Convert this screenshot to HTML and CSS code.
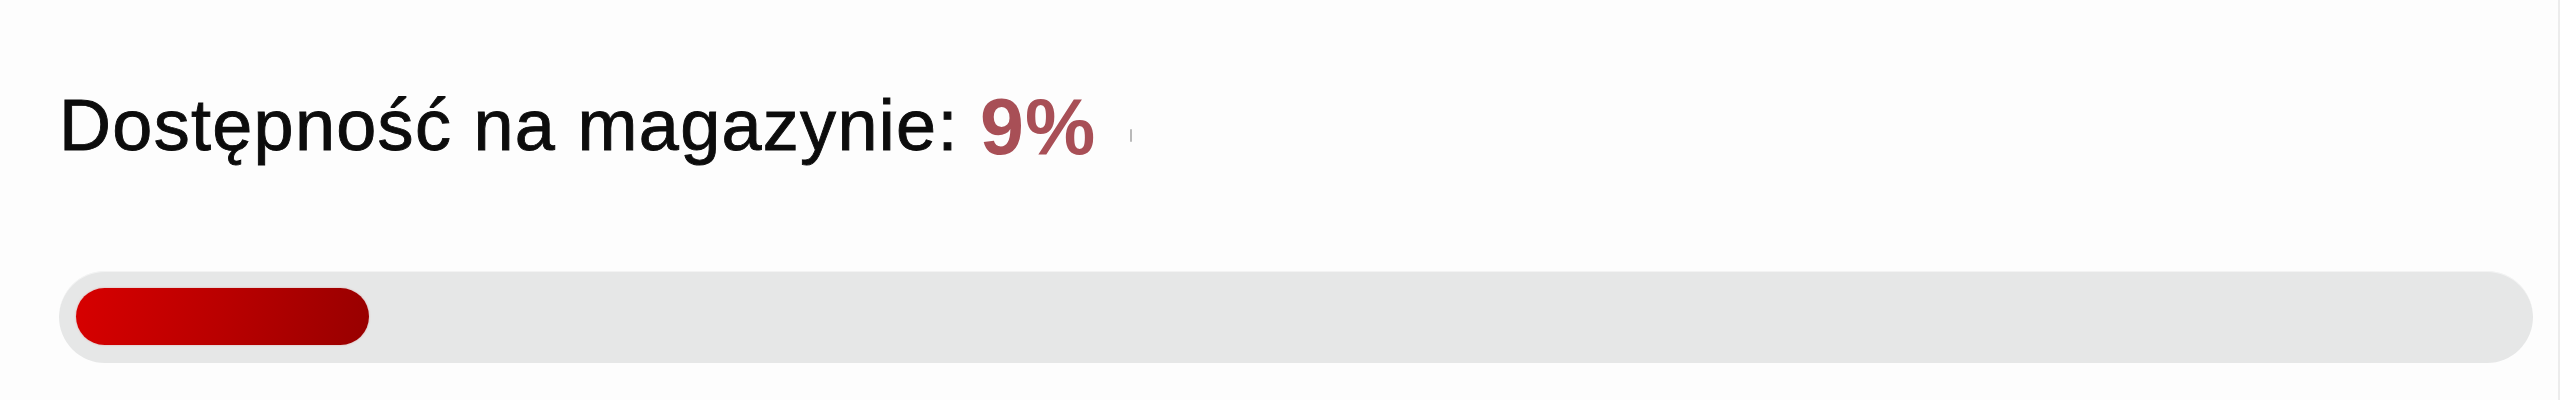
FILE: index.html
```html
<!DOCTYPE html>
<html lang="pl">
<head>
<meta charset="utf-8">
<title>Dostępność na magazynie</title>
<link rel="stylesheet" href="styles.css">
</head>
<body>
  <main class="stock">
    <h2 class="stock-label">Dostępność na magazynie: <span class="stock-value">9%</span><span class="stock-tick"></span></h2>
    <div class="stock-track">
      <div class="stock-fill" style="width: 12%"></div>
    </div>
  </main>
</body>
</html>
```

FILE: styles.css
```css
html, body {
  margin: 0;
  padding: 0;
}

body {
  background: #fdfdfd;
  border-right: 2px solid #ececec;
  min-height: 400px;
  box-sizing: border-box;
  font-family: "Liberation Sans", Arial, sans-serif;
}

.stock {
  padding: 87px 25px 0 59px;
}

.stock-label {
  margin: 0;
  font-size: 72px;
  font-weight: 400;
  line-height: 1;
  color: #0c0c0c;
  letter-spacing: 1.3px;
  -webkit-text-stroke: 0.9px #0c0c0c;
}

.stock-value {
  font-size: 79px;
  font-weight: 700;
  color: #a84f56;
  letter-spacing: 1px;
  -webkit-text-stroke: 0;
  vertical-align: -4px;
}

.stock-tick {
  display: inline-block;
  width: 2px;
  height: 13px;
  margin-left: 34px;
  border-radius: 1px;
  background: #b9b9b9;
  vertical-align: 8px;
}

.stock-track {
  margin-top: 105px;
  height: 92px;
  padding: 17px;
  box-sizing: border-box;
  border-radius: 46px;
  background: #e6e7e7;
  box-shadow: inset 0 1px 0 rgba(255, 255, 255, 0.5);
}

.stock-fill {
  height: 57px;
  border-radius: 29px;
  background: linear-gradient(100deg, #d70000 0%, #b90000 50%, #980000 100%);
  box-shadow: 0 0 2px rgba(210, 40, 40, 0.35);
}
```
